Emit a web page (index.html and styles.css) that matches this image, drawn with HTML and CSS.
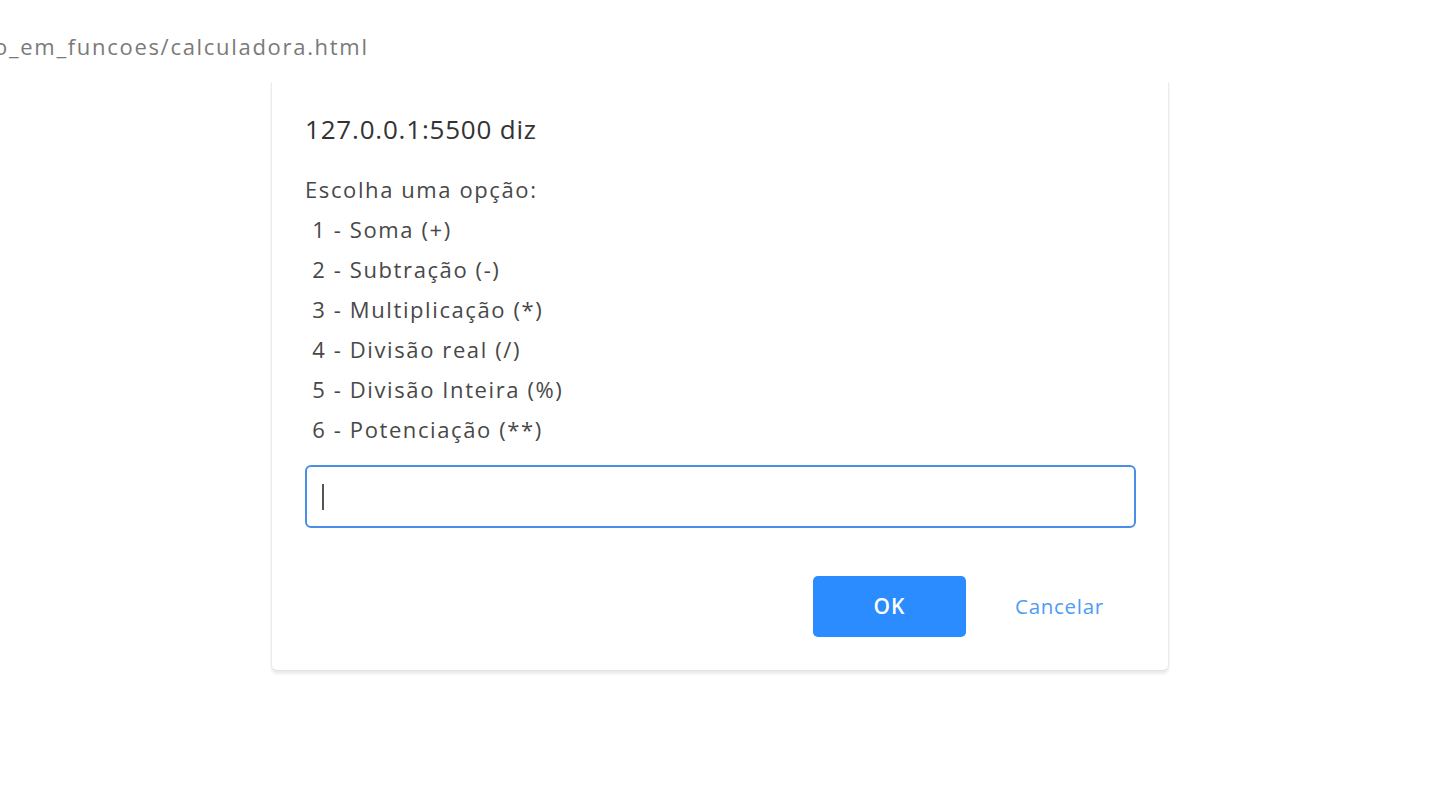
FILE: index.html
```html
<!DOCTYPE html>
<html lang="pt">
<head>
<meta charset="utf-8">
<title>calculadora</title>
<link rel="stylesheet" href="styles.css">
</head>
<body>
<div class="page">
  <div class="url">o_em_funcoes/calculadora.html</div>
  <div class="dialog">
    <div class="title">127.0.0.1:5500 diz</div>
    <div class="message">
      <div class="line">Escolha uma opção:</div>
      <div class="line"> 1 - Soma (+)</div>
      <div class="line"> 2 - Subtração (-)</div>
      <div class="line"> 3 - Multiplicação (*)</div>
      <div class="line"> 4 - Divisão real (/)</div>
      <div class="line"> 5 - Divisão Inteira (%)</div>
      <div class="line"> 6 - Potenciação (**)</div>
    </div>
    <div class="field"><span class="caret"></span></div>
    <div class="actions">
      <div class="btn ok">OK</div>
      <div class="btn cancel">Cancelar</div>
    </div>
  </div>
</div>
</body>
</html>
```
FILE: styles.css
```css
html, body {
  margin: 0;
  padding: 0;
  background: #ffffff;
  width: 1440px;
  height: 810px;
  overflow: hidden;
}
.page {
  font-family: "Open Sans", "Noto Sans", sans-serif;
  display: flex;
  flex-direction: column;
}
.url {
  margin: 30px 0 0 -6px;
  font-size: 22px;
  line-height: 32px;
  letter-spacing: 1.7px;
  color: #7a7a7a;
  height: 32px;
  white-space: nowrap;
}
.dialog {
  margin: 20px 0 0 271px;
  width: 898px;
  height: 589px;
  box-sizing: border-box;
  padding: 30px 32px 0 33px;
  background: #ffffff;
  border-left: 1px solid #ebebeb;
  border-right: 1px solid #ebebeb;
  border-bottom: 1px solid #e2e2e2;
  border-radius: 0 0 6px 6px;
  box-shadow: 0 3px 3px rgba(0,0,0,0.08);
  display: flex;
  flex-direction: column;
}
.title {
  font-size: 26px;
  line-height: 34px;
  letter-spacing: 0.8px;
  color: #333333;
}
.message {
  margin-top: 23px;
  font-size: 22px;
  letter-spacing: 1.6px;
  color: #484848;
}
.line {
  white-space: pre;
  line-height: 40px;
  height: 40px;
}
.field {
  margin-top: 16px;
  height: 63px;
  box-sizing: border-box;
  border: 2px solid #4a8fe6;
  border-radius: 6px;
  display: flex;
  align-items: center;
  padding-left: 15px;
}
.caret {
  width: 2px;
  height: 26px;
  background: #555555;
}
.actions {
  margin-top: 48px;
  display: flex;
  justify-content: flex-end;
  gap: 17px;
}
.btn {
  width: 153px;
  height: 61px;
  box-sizing: border-box;
  padding-bottom: 2px;
  border-radius: 5px;
  display: flex;
  align-items: center;
  justify-content: center;
  font-size: 21px;
}
.ok {
  background: #2a8cff;
  color: #ffffff;
  font-weight: 600;
  letter-spacing: 1px;
}
.cancel {
  color: #4f9cf2;
  font-size: 20.5px;
  letter-spacing: 0.7px;
}
```
